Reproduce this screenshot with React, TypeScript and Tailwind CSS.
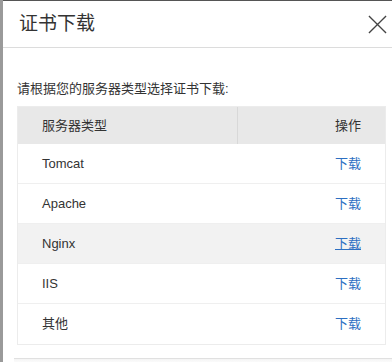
import React from "react";

const rows = ["Tomcat", "Apache", "Nginx", "IIS", "其他"];

export default function App() {
  return (
    <div
      className="w-[392px] h-[362px] overflow-hidden bg-white flex"
      style={{ fontFamily: '"Liberation Sans", "Noto Sans CJK SC", sans-serif' }}
    >
      <div className="w-[3px] h-full bg-[#9a9a9a] shrink-0" />
      <div className="flex-1 border-t border-[#555]">
        <div className="h-[47px] flex items-center justify-between pl-[16px] pr-[5px] border-b border-[#dcdcdc]">
          <span className="text-[19px] text-[#333]">证书下载</span>
          <svg width="19" height="19" viewBox="0 0 20 20">
            <path d="M1 1 L19 19 M19 1 L1 19" stroke="#444" strokeWidth="1.4" fill="none" />
          </svg>
        </div>
        <div className="pl-[14px] pr-[6px]">
          <div className="mt-[32px] text-[13px] text-[#333] leading-[18px]">请根据您的服务器类型选择证书下载:</div>
          <div className="mt-[8px] border border-[#ececec]">
            <div className="h-[37px] flex bg-[#e8e8e8] text-[13px] text-[#333]">
              <div className="w-[220px] flex items-center pl-[24px] border-r border-[#d8d8d8]">服务器类型</div>
              <div className="flex-1 flex items-center justify-end pr-[24px]">操作</div>
            </div>
            {rows.map((r, i) => (
              <div
                key={r}
                className={`h-[40px] flex items-center justify-between pl-[24px] pr-[24px] text-[13px] ${
                  i < rows.length - 1 ? "border-b border-[#efefef]" : ""
                } ${r === "Nginx" ? "bg-[#f2f2f2]" : "bg-white"}`}
              >
                <span className="text-[#333]">{r}</span>
                <span className={`text-[#2d6fc2] ${r === "Nginx" ? "underline" : ""}`}>下载</span>
              </div>
            ))}
          </div>
        </div>
        <div className="mt-[13px] ml-[11px] border-t border-[#e0e0e0] h-[6px] bg-gradient-to-b from-[#f4f4f4] to-white" />
      </div>
    </div>
  );
}
